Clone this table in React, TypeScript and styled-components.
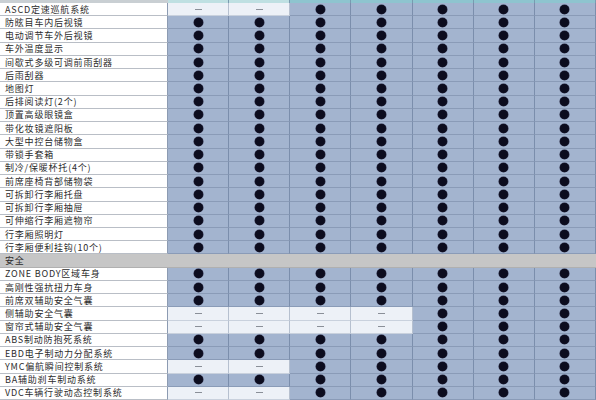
import React from "react";
import styled, { createGlobalStyle } from "styled-components";

const Global = createGlobalStyle`
  html, body { margin: 0; padding: 0; background: #ffffff; }
  body { font-family: "Noto Sans CJK SC", "Noto Sans", sans-serif; }
`;

type Row =
  | { kind: "section"; label: string }
  | { kind: "item"; label: string; dashes: number };

const rows: Row[] = [
  { kind: "item", label: "ASCD定速巡航系统", dashes: 2 },
  { kind: "item", label: "防眩目车内后视镜", dashes: 0 },
  { kind: "item", label: "电动调节车外后视镜", dashes: 0 },
  { kind: "item", label: "车外温度显示", dashes: 0 },
  { kind: "item", label: "间歇式多级可调前雨刮器", dashes: 0 },
  { kind: "item", label: "后雨刮器", dashes: 0 },
  { kind: "item", label: "地图灯", dashes: 0 },
  { kind: "item", label: "后排阅读灯(2个)", dashes: 0 },
  { kind: "item", label: "顶置高级眼镜盒", dashes: 0 },
  { kind: "item", label: "带化妆镜遮阳板", dashes: 0 },
  { kind: "item", label: "大型中控台储物盒", dashes: 0 },
  { kind: "item", label: "带锁手套箱", dashes: 0 },
  { kind: "item", label: "制冷/保暖杯托(4个)", dashes: 0 },
  { kind: "item", label: "前席座椅背部储物袋", dashes: 0 },
  { kind: "item", label: "可拆卸行李厢托盘", dashes: 0 },
  { kind: "item", label: "可拆卸行李厢抽屉", dashes: 0 },
  { kind: "item", label: "可伸缩行李厢遮物帘", dashes: 0 },
  { kind: "item", label: "行李厢照明灯", dashes: 0 },
  { kind: "item", label: "行李厢便利挂钩(10个)", dashes: 0 },
  { kind: "section", label: "安全" },
  { kind: "item", label: "ZONE BODY区域车身", dashes: 0 },
  { kind: "item", label: "高刚性强抗扭力车身", dashes: 0 },
  { kind: "item", label: "前席双辅助安全气囊", dashes: 0 },
  { kind: "item", label: "侧辅助安全气囊", dashes: 4 },
  { kind: "item", label: "窗帘式辅助安全气囊", dashes: 4 },
  { kind: "item", label: "ABS制动防抱死系统", dashes: 0 },
  { kind: "item", label: "EBD电子制动力分配系统", dashes: 0 },
  { kind: "item", label: "YMC偏航瞬间控制系统", dashes: 2 },
  { kind: "item", label: "BA辅助刹车制动系统", dashes: 0 },
  { kind: "item", label: "VDC车辆行驶动态控制系统", dashes: 2 },
];

const COLS = 7;

const Table = styled.div`
  display: grid;
  grid-template-columns: 168px repeat(${COLS}, 1fr);
  grid-template-rows: 3px repeat(${rows.length}, 1fr);
  width: 596px;
  height: 400px;
  background: #ffffff;
`;

const TopStrip = styled.div<{ $tone: "label" | "light" | "blue" }>`
  background: ${(p) =>
    p.$tone === "label" ? "#c9cfd3" : p.$tone === "light" ? "#bfe0e2" : "#8ec4cf"};
  border-right: 1px solid ${(p) => (p.$tone === "label" ? "#c9cfd3" : "#7a9ab0")};
`;

const Label = styled.div`
  display: flex;
  align-items: center;
  padding-left: 5px;
  font-size: 9px;
  letter-spacing: 0.8px;
  line-height: 11px;
  color: #2c2c2c;
  background: #ffffff;
  border-bottom: 1px solid #b9bec6;
  border-right: 1px solid #8c9bb2;
  white-space: nowrap;
  box-sizing: border-box;
  min-height: 0;
`;

const Section = styled.div`
  grid-column: 1 / -1;
  display: flex;
  align-items: center;
  padding-left: 5px;
  font-size: 9px;
  letter-spacing: 0.8px;
  line-height: 11px;
  color: #2c2c2c;
  background: #c6c6c6;
  border-bottom: 1px solid #b0b0b0;
  box-sizing: border-box;
  min-height: 0;
`;

const Cell = styled.div<{ $light: boolean }>`
  display: flex;
  align-items: center;
  justify-content: center;
  background: ${(p) => (p.$light ? "#edf1f7" : "#a3b4cf")};
  border-bottom: 1px solid ${(p) => (p.$light ? "#c9d1dd" : "#8a9bb7")};
  border-right: 1px solid ${(p) => (p.$light ? "#b6c0cf" : "#7b8eac")};
  box-sizing: border-box;
  min-height: 0;
`;

const Dot = styled.span`
  width: 9px;
  height: 9px;
  border-radius: 50%;
  background: #0c0c1e;
  box-shadow: 0 0 0 0.5px #2a2a44;
`;

const Dash = styled.span`
  width: 7px;
  height: 1px;
  background: #8a8f98;
`;

export default function App() {
  return (
    <>
      <Global />
      <Table>
        <TopStrip $tone="label" />
        {Array.from({ length: COLS }).map((_, i) => (
          <TopStrip key={`t${i}`} $tone={i < 2 ? "light" : "blue"} />
        ))}
        {rows.map((r, ri) =>
          r.kind === "section" ? (
            <Section key={ri}>{r.label}</Section>
          ) : (
            <React.Fragment key={ri}>
              <Label>{r.label}</Label>
              {Array.from({ length: COLS }).map((_, ci) => {
                const light = ci < r.dashes;
                return (
                  <Cell key={ci} $light={light}>
                    {light ? <Dash /> : <Dot />}
                  </Cell>
                );
              })}
            </React.Fragment>
          )
        )}
      </Table>
    </>
  );
}
